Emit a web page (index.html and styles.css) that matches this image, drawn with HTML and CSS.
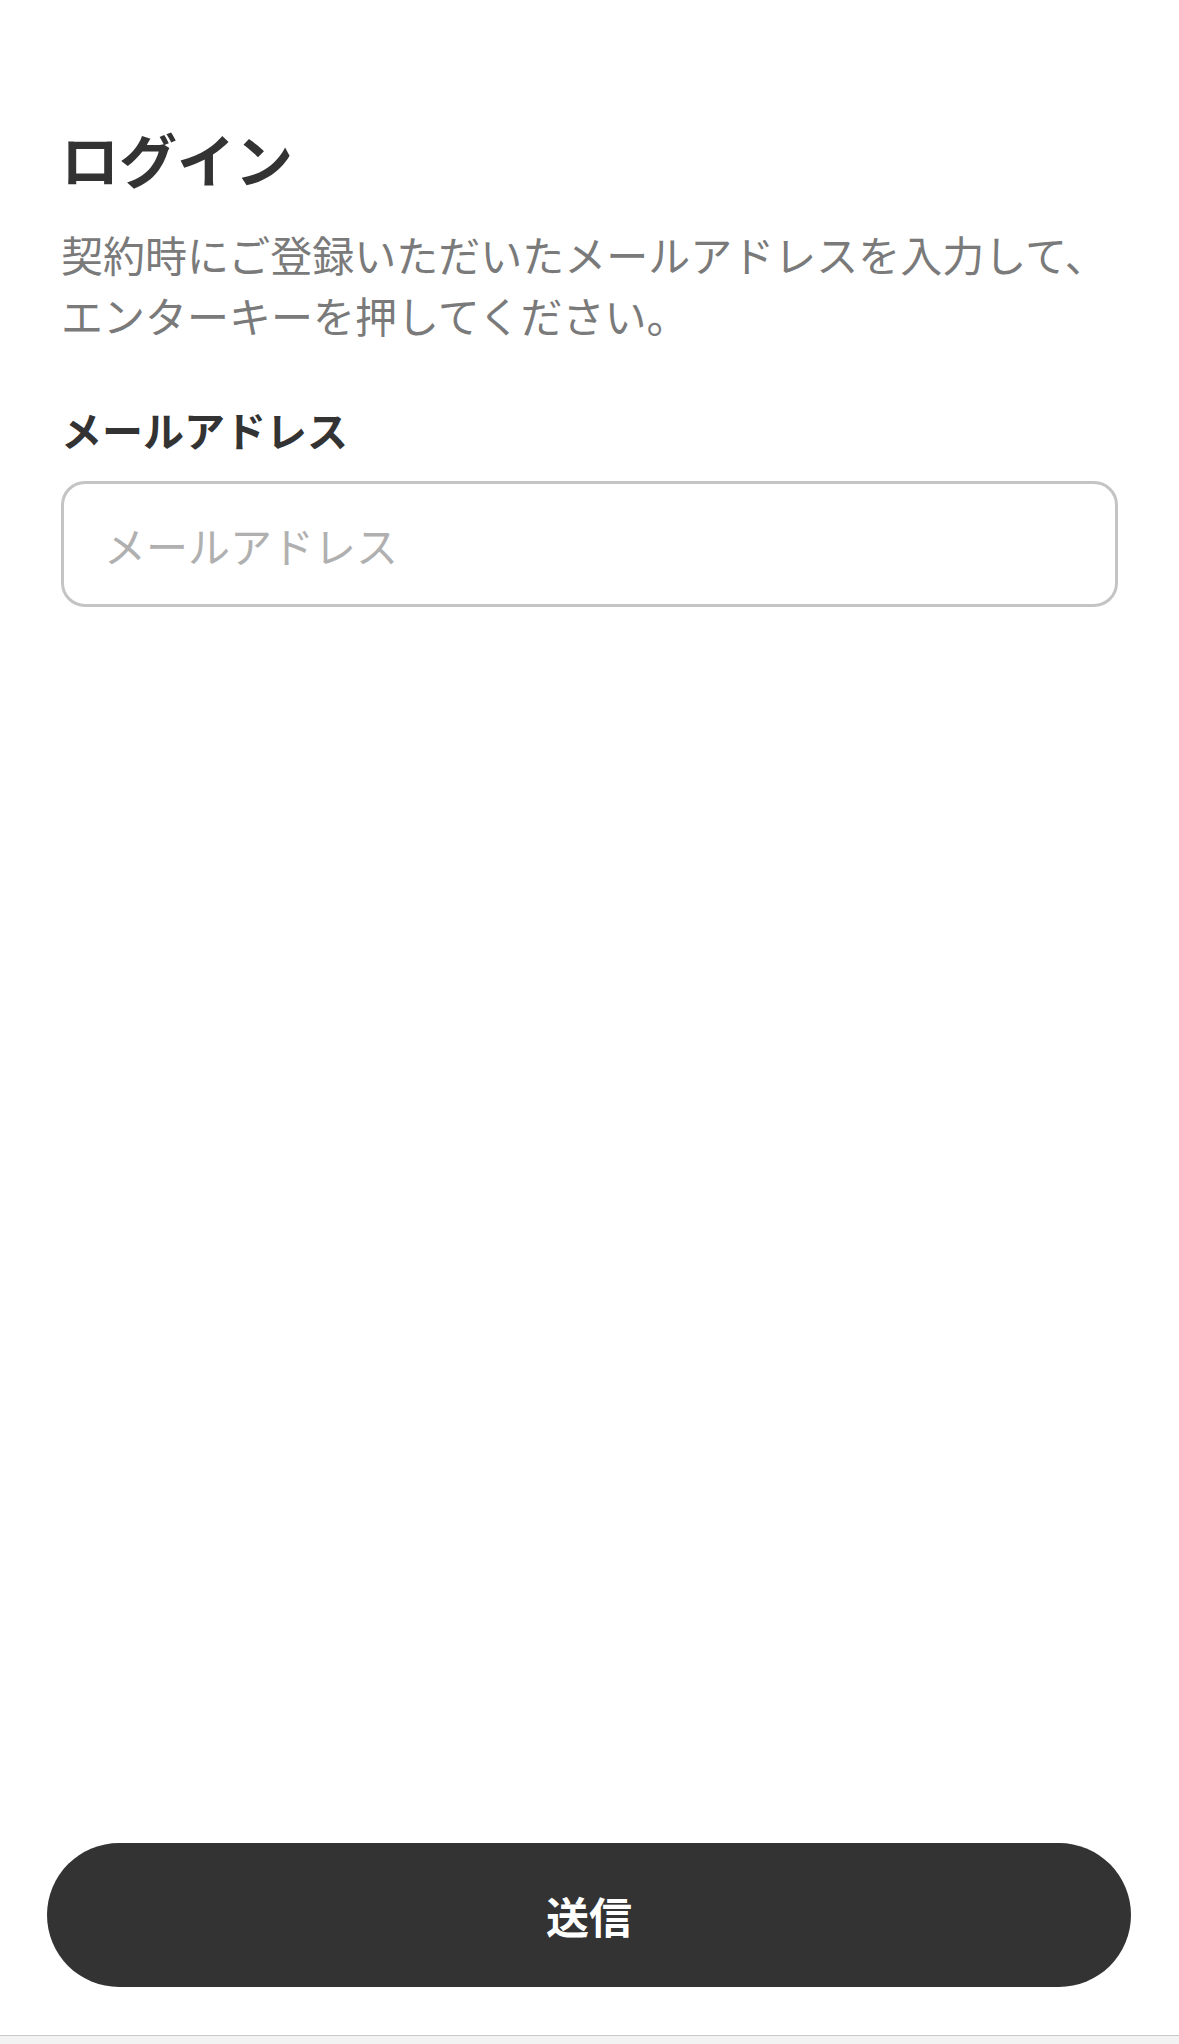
FILE: index.html
```html
<!DOCTYPE html>
<html lang="ja">
<head>
<meta charset="utf-8">
<title>ログイン</title>
<link rel="stylesheet" href="styles.css">
</head>
<body>
<div class="page">
  <main class="content">
    <h1 class="title">ログイン</h1>
    <p class="lead">契約時にご登録いただいたメールアドレスを入力して、<br>エンターキーを押してください。</p>
    <label class="label" for="email">メールアドレス</label>
    <input class="input" id="email" type="email" placeholder="メールアドレス">
  </main>
  <div class="actions">
    <button class="submit" type="button">送信</button>
  </div>
  <div class="toolbar"></div>
</div>
</body>
</html>
```

FILE: styles.css
```css
* { box-sizing: border-box; }
html, body { margin: 0; padding: 0; background: #ffffff; }
body {
  font-family: "Noto Sans CJK JP", "Noto Sans", sans-serif;
  color: #333333;
}
.page {
  min-height: 100vh;
  display: flex;
  flex-direction: column;
}
.content {
  flex: 1;
  display: flex;
  flex-direction: column;
  padding: 124px 61px 0;
}
.title {
  margin: 0;
  font-size: 58px;
  line-height: 68px;
  font-weight: 700;
  color: #333333;
}
.lead {
  margin: 31px 0 0;
  font-size: 42px;
  line-height: 61px;
  color: #7a7a7a;
  font-weight: 400;
}
.label {
  margin-top: 54px;
  font-size: 41px;
  line-height: 61px;
  font-weight: 700;
  color: #333333;
}
.input {
  margin-top: 21px;
  width: 100%;
  height: 126px;
  border: 3px solid #c4c4c4;
  border-radius: 24px;
  padding: 0 40px;
  font-family: inherit;
  font-size: 42px;
  color: #333333;
  background: #ffffff;
  outline: none;
}
.input::placeholder { color: #b0b0b0; }
.actions {
  padding: 0 48px 48px 47px;
}
.submit {
  display: block;
  width: 100%;
  height: 144px;
  border: none;
  border-radius: 72px;
  background: #333333;
  color: #ffffff;
  font-family: inherit;
  font-size: 43px;
  font-weight: 700;
  cursor: pointer;
}
.toolbar {
  height: 9px;
  border-top: 1px solid #c8c8c8;
  background: #f2f2f2;
}
```
